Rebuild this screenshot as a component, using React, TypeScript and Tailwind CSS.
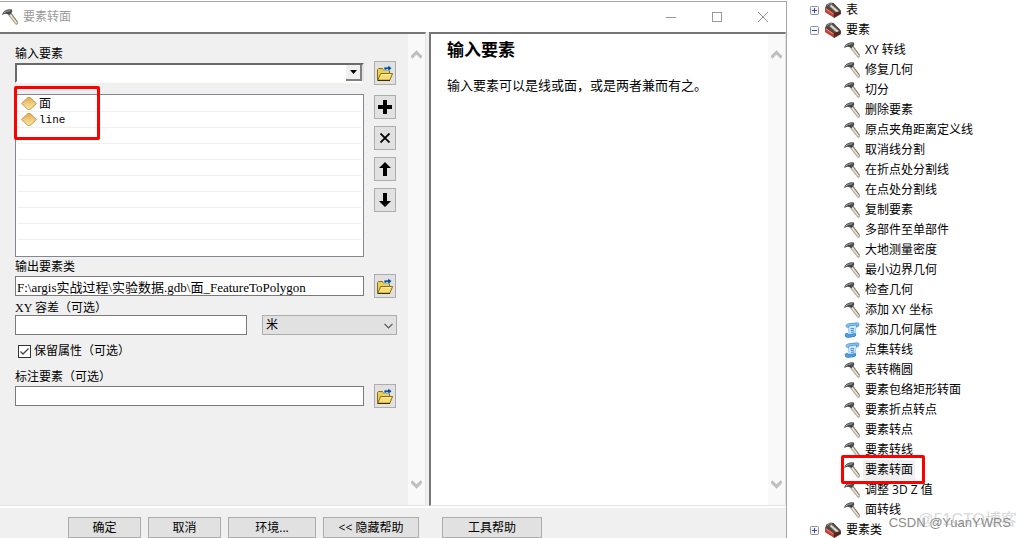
import { useState } from "react"
import type { ReactNode } from "react"

type ToolKind = "hammer" | "script"

interface Tool {
  name: string
  kind?: ToolKind
}

const tools: Tool[] = [
  { name: "XY 转线" },
  { name: "修复几何" },
  { name: "切分" },
  { name: "删除要素" },
  { name: "原点夹角距离定义线" },
  { name: "取消线分割" },
  { name: "在折点处分割线" },
  { name: "在点处分割线" },
  { name: "复制要素" },
  { name: "多部件至单部件" },
  { name: "大地测量密度" },
  { name: "最小边界几何" },
  { name: "检查几何" },
  { name: "添加 XY 坐标" },
  { name: "添加几何属性", kind: "script" },
  { name: "点集转线", kind: "script" },
  { name: "表转椭圆" },
  { name: "要素包络矩形转面" },
  { name: "要素折点转点" },
  { name: "要素转点" },
  { name: "要素转线" },
  { name: "要素转面" },
  { name: "调整 3D Z 值" },
  { name: "面转线" },
]

const ROW_COUNT = 10

function HammerIcon() {
  return (
    <svg width="16" height="16" viewBox="0 0 16 16" className="shrink-0" aria-hidden="true">
      <path d="M6 5.4 L8.6 3.4 L15.9 13.4 Q15.9 15.2 14 15.6 Z" fill="#cfc6b0" stroke="#857d6b" strokeWidth="0.6" />
      <path d="M8 5.6 L14.6 14" stroke="#f4efe0" strokeWidth="1" />
      <path d="M9 4.4 L15.6 13.4" stroke="#6f6858" strokeWidth="0.7" />
      <path d="M0.2 6.2 Q0.4 3 3.8 1.3 L6.8 0.3 L10 0.6 L10.2 3 L7.6 6 L5.2 5 Q2.6 4.4 0.2 6.2 Z" fill="#454849" />
      <path d="M1.6 4 Q4 1.9 8.4 1.7" stroke="#a5abad" strokeWidth="1" fill="none" />
    </svg>
  )
}

function ScriptIcon() {
  return (
    <svg width="16" height="16" viewBox="0 0 16 16" className="shrink-0" aria-hidden="true">
      <path d="M4.2 2.4 L12.4 1.4 L12.6 5 Q10.4 7.4 11.8 10.6 L11 14 L4 14.6 Q5.8 11 4.4 7.6 Z" fill="#cfe8fb" stroke="#66abe2" strokeWidth="0.6" />
      <path d="M4.6 5.4 Q1.6 5.6 2 3.6 Q2.4 2 4.8 1.8 L13 0.8 Q15.4 0.8 15 3.2 Q14.6 5 12.4 4.8 L13 3 L5.4 3.8 Z" fill="#8cc6f2" stroke="#3888cf" strokeWidth="0.7" />
      <path d="M1.2 12.4 Q1.6 11 3.6 11.4 L4.4 12.8 L11.4 11.6 Q12.6 13 10.8 14.4 L3.4 15.6 Q0.8 15.2 1.2 12.4 Z" fill="#4fa0e4" stroke="#2470b8" strokeWidth="0.7" />
      <path d="M6.4 6.8 L10 6.4 M6.6 8.6 L10 8.2 M6.8 10.4 L10.2 10" stroke="#2f83cc" strokeWidth="0.9" />
    </svg>
  )
}

function ToolboxIcon() {
  return (
    <svg width="16" height="16" viewBox="0 0 16 16" className="shrink-0" aria-hidden="true">
      <path d="M0.3 5.4 L1.4 2.4 L5.4 0.6 L8.6 1 L16 8.4 L12.6 10.4 L9 12.6 Z" fill="#4d4a48" />
      <path d="M1.6 3.8 Q3.6 1.4 7 1.6" stroke="#a5a19c" strokeWidth="0.9" fill="none" />
      <path d="M4.2 4 L6.6 2.6 L14.6 9.4 L11.4 10.6 Z" fill="#c9c2b2" stroke="#6b655a" strokeWidth="0.4" />
      <path d="M6 3.8 L13.2 9.8" stroke="#f2ede1" strokeWidth="0.9" />
      <path d="M0.3 5.6 L9.2 11.6 L9.4 15.5 L0.4 10 Z" fill="#cf4130" stroke="#7c1c14" strokeWidth="0.6" />
      <path d="M9.2 11.6 L15.6 9 V12 L9.4 15.5 Z" fill="#5c2620" stroke="#3d1510" strokeWidth="0.6" />
      <path d="M1 6.8 L8.6 12" stroke="#f09a8a" strokeWidth="0.9" />
    </svg>
  )
}

function FolderIcon() {
  return (
    <svg width="16" height="16" viewBox="0 0 16 16" aria-hidden="true">
      <path d="M0.5 15 V4.5 L1.5 3.5 H5.5 L6.5 5 H12.5 V8" fill="#e9cf5c" stroke="#8a6d12" strokeWidth="1" />
      <path d="M0.8 15.2 L3.6 8.5 H15.6 L12.8 15.2 Z" fill="#f8dd73" stroke="#8a6d12" strokeWidth="1" />
      <path d="M4.4 9.6 H14" stroke="#fff4b8" strokeWidth="1" />
      <path d="M0.5 15.5 H13" stroke="#3d2d00" strokeWidth="1" />
      <path d="M7 5 V2 H11 V0 L15 3.2 L11 6.4 V4.4 H9 V5.4 Z" fill="#0a4a94" stroke="#d5ecfb" strokeWidth="0.7" />
    </svg>
  )
}

function LayerIcon() {
  return (
    <svg width="16" height="13" viewBox="0 0 16 13" className="shrink-0" aria-hidden="true">
      <defs>
        <linearGradient id="layer-fill" x1="0" y1="0" x2="0" y2="1">
          <stop offset="0" stopColor="#e3ae55" />
          <stop offset="1" stopColor="#fbe7a6" />
        </linearGradient>
      </defs>
      <path d="M6.8 0.6 H9.2 L15.5 6.5 L9.2 12.4 H6.8 L0.5 6.5 Z" fill="url(#layer-fill)" stroke="#b98a3c" strokeWidth="0.8" />
    </svg>
  )
}

function Chevron({ up = false }: { up?: boolean }) {
  return (
    <svg width="11" height="9" viewBox="0 0 11 9" aria-hidden="true">
      <path d={up ? "M0.3 7.6 L5.5 2.4 L10.7 7.6" : "M0.3 1.4 L5.5 6.6 L10.7 1.4"} fill="none" stroke="#bfbfbf" strokeWidth="3" />
    </svg>
  )
}

function ScrollTrack() {
  return (
    <div className="flex w-[17px] shrink-0 flex-col items-center justify-between bg-[#f9f9f9] py-4">
      <Chevron up />
      <Chevron />
    </div>
  )
}

function SideButton({ label, children }: { label: string; children: ReactNode }) {
  return (
    <button
      type="button"
      aria-label={label}
      className="flex h-6 w-[22px] shrink-0 items-center justify-center border border-[#adadad] bg-[#e1e1e1]"
    >
      {children}
    </button>
  )
}

function Expander({ open }: { open: boolean }) {
  return (
    <svg width="9" height="9" viewBox="0 0 9 9" className="shrink-0" aria-hidden="true">
      <rect x="0.5" y="0.5" width="8" height="8" rx="1" fill="#f7f7f7" stroke="#919191" />
      <path d={open ? "M2 4.5 H7" : "M2 4.5 H7 M4.5 2 V7"} stroke="#2c4fa3" />
    </svg>
  )
}

function TreeFolder({ name, open = false }: { name: string; open?: boolean }) {
  return (
    <div className="flex h-5 items-center pl-[23px]">
      <Expander open={open} />
      <span className="ml-1.5 flex">
        <ToolboxIcon />
      </span>
      <span className="ml-[5px]">{name}</span>
    </div>
  )
}

const footerButton = "h-[21px] border border-[#adadad] bg-[#e1e1e1] text-center leading-5"
const textBox = "h-5 w-full min-w-0 border border-[#7a7a7a] bg-white px-px text-[13px] outline-none"
const fieldLabel = "h-4 leading-[18px]"

function ParameterForm() {
  const [output, setOutput] = useState("F:\\argis实战过程\\实验数据.gdb\\面_FeatureToPolygon")
  const [tolerance, setTolerance] = useState("")
  const [labelFeatures, setLabelFeatures] = useState("")
  const [keepAttributes, setKeepAttributes] = useState(true)

  return (
    <form className="flex min-w-0 flex-1 flex-col pt-[11px] pr-3 pl-[15px] leading-4">
      <label htmlFor="input-features" className={fieldLabel}>
        输入要素
      </label>
      <div className="flex items-center gap-2.5">
        <div className="relative flex-1">
          <select
            id="input-features"
            className="block h-5 w-full appearance-none border-2 border-t-[#696969] border-r-[#e3e3e3] border-b-white border-l-[#696969] bg-white outline-none"
          />
          <span className="pointer-events-none absolute top-0.5 right-0.5 flex h-4 w-4 items-center justify-center border-r-2 border-b-2 border-[#808080] bg-[#f0f0f0]">
            <svg width="7" height="4" viewBox="0 0 7 4" aria-hidden="true">
              <path d="M0 0 H7 L3.5 4 Z" fill="#000" />
            </svg>
          </span>
        </div>
        <SideButton label="浏览输入要素">
          <FolderIcon />
        </SideButton>
      </div>

      <div className="mt-[9px] flex gap-2.5">
        <div className="relative flex-1 border border-[#828790] bg-white px-0.5 pt-px">
          <ul>
            {Array.from({ length: ROW_COUNT }, (_, i) => (
              <li key={i} className="flex h-4 items-center border-b border-[#f0f0f0] pl-[3px] last:border-0">
                {i < 2 && <LayerIcon />}
                {i === 0 && <span className="ml-0.5 leading-[18px]">面</span>}
                {i === 1 && (
                  <span className="ml-0.5 font-['Liberation_Mono',monospace] text-[11px] leading-[18px]">line</span>
                )}
              </li>
            ))}
          </ul>
          <div className="absolute -top-[9px] -left-0.5 h-[54px] w-[86px] rounded-xs border-3 border-[#fe0000]" />
        </div>
        <div className="flex flex-col gap-[7px] pt-px">
          <SideButton label="添加">
            <svg width="14" height="14" viewBox="0 0 14 14" aria-hidden="true">
              <path d="M5 0 H9 V5 H14 V9 H9 V14 H5 V9 H0 V5 H5 Z" fill="#000" />
            </svg>
          </SideButton>
          <SideButton label="移除">
            <svg width="10" height="10" viewBox="0 0 10 10" aria-hidden="true">
              <path d="M0.5 0.5 L9.5 9.5 M9.5 0.5 L0.5 9.5" stroke="#000" strokeWidth="1.8" />
            </svg>
          </SideButton>
          <SideButton label="上移">
            <svg width="12" height="14" viewBox="0 0 12 14" aria-hidden="true">
              <path d="M6 0 L12 6 H8 V14 H4 V6 H0 Z" fill="#000" />
            </svg>
          </SideButton>
          <SideButton label="下移">
            <svg width="12" height="14" viewBox="0 0 12 14" aria-hidden="true">
              <path d="M6 14 L12 8 H8 V0 H4 V8 H0 Z" fill="#000" />
            </svg>
          </SideButton>
        </div>
      </div>

      <label htmlFor="output" className={`${fieldLabel} mt-px`}>
        输出要素类
      </label>
      <div className="flex items-center gap-2.5">
        <input
          id="output"
          value={output}
          onChange={(e) => setOutput(e.target.value)}
          className={textBox}
        />
        <SideButton label="浏览输出要素类">
          <FolderIcon />
        </SideButton>
      </div>

      <label htmlFor="tolerance" className={`${fieldLabel} mt-px`}>
        XY 容差（可选）
      </label>
      <div className="-mr-px flex gap-[15px]">
        <input
          id="tolerance"
          value={tolerance}
          onChange={(e) => setTolerance(e.target.value)}
          className={textBox}
        />
        <div className="relative w-[135px] shrink-0">
          <select
            aria-label="单位"
            className="block h-5 w-full appearance-none border border-[#adadad] bg-[#e1e1e1] px-[3px] outline-none"
          >
            <option>米</option>
          </select>
          <svg width="9" height="6" viewBox="0 0 9 6" className="pointer-events-none absolute top-2 right-1" aria-hidden="true">
            <path d="M0.5 0.8 L4.5 4.8 L8.5 0.8" fill="none" stroke="#555" strokeWidth="1.2" />
          </svg>
        </div>
      </div>

      <label className="mt-2 flex items-center gap-[3px] pl-[3px]">
        <span className="relative flex">
          <input
            type="checkbox"
            checked={keepAttributes}
            onChange={(e) => setKeepAttributes(e.target.checked)}
            className="h-[13px] w-[13px] appearance-none border border-[#333] bg-white"
          />
          {keepAttributes && (
            <svg width="13" height="13" viewBox="0 0 13 13" className="pointer-events-none absolute inset-0" aria-hidden="true">
              <path d="M2.5 6.5 L5 9 L10.5 3.5" fill="none" stroke="#444" strokeWidth="1.3" />
            </svg>
          )}
        </span>
        保留属性（可选）
      </label>

      <label htmlFor="label-features" className={`${fieldLabel} mt-[9px]`}>
        标注要素（可选）
      </label>
      <div className="flex items-center gap-2.5">
        <input
          id="label-features"
          value={labelFeatures}
          onChange={(e) => setLabelFeatures(e.target.value)}
          className={textBox}
        />
        <SideButton label="浏览标注要素">
          <FolderIcon />
        </SideButton>
      </div>
    </form>
  )
}

function TitleBar() {
  return (
    <header className="flex h-[30px] items-center bg-white pl-0.5 text-[#999]">
      <HammerIcon />
      <h1 className="ml-[5px] flex-1">要素转面</h1>
      <button type="button" aria-label="最小化" className="flex h-7 w-[46px] items-center justify-center">
        <svg width="10" height="10" viewBox="0 0 10 10" aria-hidden="true">
          <path d="M0 5.5 H10" stroke="#999" />
        </svg>
      </button>
      <button type="button" aria-label="最大化" className="flex h-7 w-[46px] items-center justify-center">
        <svg width="10" height="10" viewBox="0 0 10 10" aria-hidden="true">
          <rect x="0.5" y="0.5" width="9" height="9" fill="none" stroke="#999" />
        </svg>
      </button>
      <button type="button" aria-label="关闭" className="flex h-7 w-[46px] items-center justify-center">
        <svg width="10" height="10" viewBox="0 0 10 10" aria-hidden="true">
          <path d="M0 0 L10 10 M10 0 L0 10" stroke="#999" />
        </svg>
      </button>
    </header>
  )
}

export default function App() {
  return (
    <div className="relative flex h-screen overflow-hidden bg-white font-['Liberation_Serif','Noto_Sans_CJK_SC',serif] text-xs text-black">
      <div className="mt-px flex min-w-0 flex-1 flex-col border-t border-r border-[#a6a6a6] bg-[#f0f0f0]">
        <TitleBar />

        <main className="flex min-h-0 flex-1 border-b-2 border-white">
          <section className="flex w-[426px] shrink-0 border-t-2 border-r border-b border-t-[#767676] border-r-[#e3e3e3] border-b-[#e3e3e3]">
            <ParameterForm />
            <ScrollTrack />
          </section>
          <section className="ml-[3px] flex flex-1 border-t-2 border-r border-b border-l-2 border-t-[#767676] border-r-[#e3e3e3] border-b-[#e3e3e3] border-l-[#767676] bg-white">
            <div className="flex-1 pt-[7px] pl-4">
              <h2 className="text-[17px] leading-5 font-bold">输入要素</h2>
              <p className="mt-[15px] text-[13px] leading-5">输入要素可以是线或面，或是两者兼而有之。</p>
            </div>
            <ScrollTrack />
          </section>
        </main>

        <footer className="flex gap-[7px] pt-[9px] pl-[68px] font-['Open_Sans','Noto_Sans_CJK_SC',sans-serif]">
          <button type="button" className={`${footerButton} w-[73px]`}>确定</button>
          <button type="button" className={`${footerButton} w-[73px]`}>取消</button>
          <button type="button" className={`${footerButton} w-[88px]`}>环境...</button>
          <button type="button" className={`${footerButton} w-24`}>&lt;&lt; 隐藏帮助</button>
          <button type="button" className={`${footerButton} ml-4 w-[100px]`}>工具帮助</button>
        </footer>
      </div>

      <nav className="w-60 shrink-0 font-['Open_Sans','Noto_Sans_CJK_SC',sans-serif] leading-5">
        <TreeFolder name="表" />
        <TreeFolder name="要素" open />
        <ul>
          {tools.map((tool) => {
            const selected = tool.name === "要素转面"
            return (
              <li key={tool.name} className="relative flex h-5 items-center gap-[3px] pl-[57px]">
                {tool.kind === "script" ? <ScriptIcon /> : <HammerIcon />}
                <span className={selected ? "bg-[#f0f0f0] px-0.5" : "px-0.5"}>{tool.name}</span>
                {selected && (
                  <div className="absolute -top-[5px] left-[54px] z-10 h-[29px] w-[84px] rounded-xs border-3 border-[#fe0000]" />
                )}
              </li>
            )
          })}
        </ul>
        <TreeFolder name="要素类" />
      </nav>

      <span className="absolute right-2.5 bottom-1.5 font-['Liberation_Sans','Noto_Sans_CJK_SC',sans-serif] text-base leading-6 text-[#d9d9d9]">
        @51CTO博客
      </span>
      <span className="absolute right-4 bottom-1.5 font-['Liberation_Sans',sans-serif] text-[13px] leading-[18px] text-[#8c8c8c]">
        CSDN @YuanYWRS
      </span>
    </div>
  )
}
